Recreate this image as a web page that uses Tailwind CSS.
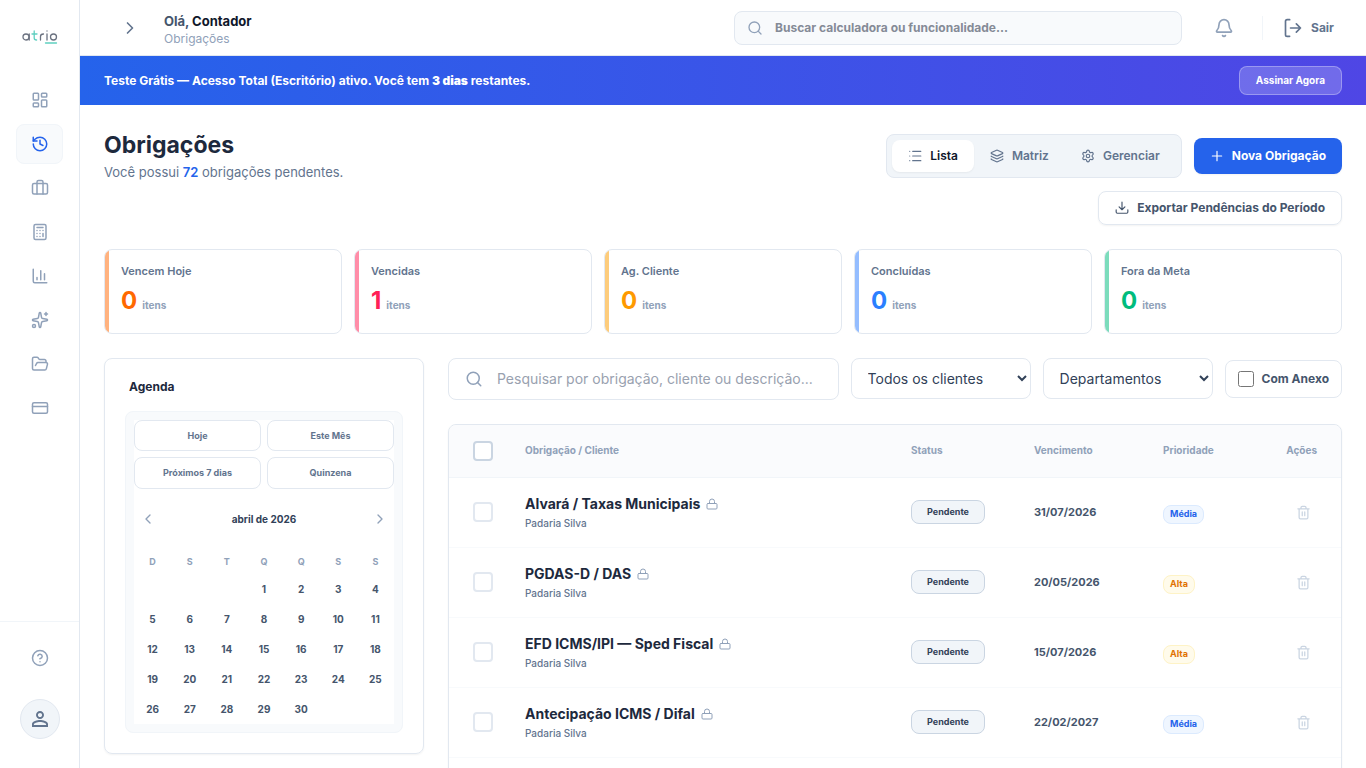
<!DOCTYPE html>
<html lang="pt-BR">
<head>
  <meta charset="UTF-8">
  <meta name="viewport" content="width=device-width, initial-scale=1.0">
  <title>Atrio - Obrigações</title>
  <script src="https://cdn.jsdelivr.net/npm/@tailwindcss/browser@4"></script>
</head>
<body class="bg-white text-slate-800 font-['Inter',sans-serif] [stroke-linecap:round] [stroke-linejoin:round]">

  <!-- Ícones -->
  <svg class="hidden">
    <symbol id="i-dashboard" viewBox="0 0 24 24"><rect width="7" height="9" x="3" y="3" rx="1"/><rect width="7" height="5" x="14" y="3" rx="1"/><rect width="7" height="9" x="14" y="12" rx="1"/><rect width="7" height="5" x="3" y="16" rx="1"/></symbol>
    <symbol id="i-history" viewBox="0 0 24 24"><path d="M3 12a9 9 0 1 0 9-9 9.75 9.75 0 0 0-6.74 2.74L3 8"/><path d="M3 3v5h5"/><path d="M12 7v5l4 2"/></symbol>
    <symbol id="i-briefcase" viewBox="0 0 24 24"><path d="M16 20V4a2 2 0 0 0-2-2h-4a2 2 0 0 0-2 2v16"/><rect width="20" height="14" x="2" y="6" rx="2"/></symbol>
    <symbol id="i-calc" viewBox="0 0 24 24"><rect width="16" height="20" x="4" y="2" rx="2"/><path d="M8 6h8M16 14v4M16 10h.01M12 10h.01M8 10h.01M12 14h.01M8 14h.01M12 18h.01M8 18h.01"/></symbol>
    <symbol id="i-chart" viewBox="0 0 24 24"><path d="M3 3v16a2 2 0 0 0 2 2h16"/><path d="M18 17V9M13 17V5M8 17v-3"/></symbol>
    <symbol id="i-sparkles" viewBox="0 0 24 24"><path d="M11.017 2.814a1 1 0 0 1 1.966 0l1.051 5.558a2 2 0 0 0 1.594 1.594l5.558 1.051a1 1 0 0 1 0 1.966l-5.558 1.051a2 2 0 0 0-1.594 1.594l-1.051 5.558a1 1 0 0 1-1.966 0l-1.051-5.558a2 2 0 0 0-1.594-1.594l-5.558-1.051a1 1 0 0 1 0-1.966l5.558-1.051a2 2 0 0 0 1.594-1.594z"/><path d="M20 2v4M22 4h-4"/><circle cx="4" cy="20" r="2"/></symbol>
    <symbol id="i-folder" viewBox="0 0 24 24"><path d="m6 14 1.5-2.9A2 2 0 0 1 9.24 10H20a2 2 0 0 1 1.94 2.5l-1.54 6a2 2 0 0 1-1.95 1.5H4a2 2 0 0 1-2-2V5a2 2 0 0 1 2-2h3.9a2 2 0 0 1 1.69.9l.81 1.2a2 2 0 0 0 1.67.9H18a2 2 0 0 1 2 2v2"/></symbol>
    <symbol id="i-card" viewBox="0 0 24 24"><rect width="20" height="14" x="2" y="5" rx="2"/><path d="M2 10h20"/></symbol>
    <symbol id="i-help" viewBox="0 0 24 24"><circle cx="12" cy="12" r="10"/><path d="M9.09 9a3 3 0 0 1 5.83 1c0 2-3 3-3 3M12 17h.01"/></symbol>
    <symbol id="i-right" viewBox="0 0 24 24"><path d="m9 18 6-6-6-6"/></symbol>
    <symbol id="i-left" viewBox="0 0 24 24"><path d="m15 18-6-6 6-6"/></symbol>
    <symbol id="i-search" viewBox="0 0 24 24"><circle cx="11" cy="11" r="8"/><path d="m21 21-4.3-4.3"/></symbol>
    <symbol id="i-bell" viewBox="0 0 24 24"><path d="M10.268 21a2 2 0 0 0 3.464 0"/><path d="M3.262 15.326A1 1 0 0 0 4 17h16a1 1 0 0 0 .74-1.673C19.41 13.956 18 12.499 18 8A6 6 0 0 0 6 8c0 4.499-1.411 5.956-2.738 7.326"/></symbol>
    <symbol id="i-logout" viewBox="0 0 24 24"><path d="M8 22H5a2 2 0 0 1-2-2V4a2 2 0 0 1 2-2h3M16 17l5-5-5-5M21 12H9"/></symbol>
    <symbol id="i-list" viewBox="0 0 24 24"><path d="M3 4h.01M3 12h.01M3 20h.01M8 4h14M8 12h14M8 20h14"/></symbol>
    <symbol id="i-layers" viewBox="0 0 24 24"><path d="M12.83 2.18a2 2 0 0 0-1.66 0L2.6 6.08a1 1 0 0 0 0 1.83l8.58 3.91a2 2 0 0 0 1.66 0l8.58-3.9a1 1 0 0 0 0-1.83z"/><path d="M2 12a1 1 0 0 0 .58.91l8.6 3.91a2 2 0 0 0 1.65 0l8.58-3.9A1 1 0 0 0 22 12M2 17a1 1 0 0 0 .58.91l8.6 3.91a2 2 0 0 0 1.65 0l8.58-3.9A1 1 0 0 0 22 17"/></symbol>
    <symbol id="i-settings" viewBox="0 0 24 24"><path d="M9.671 4.136a2.34 2.34 0 0 1 4.659 0 2.34 2.34 0 0 0 3.319 1.915 2.34 2.34 0 0 1 2.33 4.033 2.34 2.34 0 0 0 0 3.831 2.34 2.34 0 0 1-2.33 4.033 2.34 2.34 0 0 0-3.319 1.915 2.34 2.34 0 0 1-4.659 0 2.34 2.34 0 0 0-3.32-1.915 2.34 2.34 0 0 1-2.33-4.033 2.34 2.34 0 0 0 0-3.831A2.34 2.34 0 0 1 6.35 6.051a2.34 2.34 0 0 0 3.319-1.915"/><circle cx="12" cy="12" r="3"/></symbol>
    <symbol id="i-plus" viewBox="0 0 24 24"><path d="M4 12h16M12 4v16"/></symbol>
    <symbol id="i-download" viewBox="0 0 24 24"><path d="M22 15v4a2 2 0 0 1-2 2H4a2 2 0 0 1-2-2v-4M7 10l5 5 5-5M12 15V2"/></symbol>
    <symbol id="i-lock" viewBox="0 0 24 24"><rect width="20" height="11" x="2" y="11" rx="2"/><path d="M7 11V7a5 5 0 0 1 10 0v4"/></symbol>
    <symbol id="i-trash" viewBox="0 0 24 24"><path d="M3 6h18M19 6v14a2 2 0 0 1-2 2H7a2 2 0 0 1-2-2V6M8 6V4a2 2 0 0 1 2-2h4a2 2 0 0 1 2 2v2M10 11v6M14 11v6"/></symbol>
  </svg>

  <div class="flex items-start">

    <!-- Menu lateral -->
    <aside class="sticky top-0 flex h-screen w-20 shrink-0 flex-col border-r border-slate-200">
      <a href="#" aria-label="Atrio" class="flex h-20 justify-center pt-7">
        <svg class="h-4 w-9" viewBox="0 0 36 16" fill="none" stroke="#6b7280" stroke-width="1.3">
          <circle cx="4" cy="9" r="3"/><path d="M7.2 6v6"/>
          <path stroke="#5fcfc0" d="M12.2 3v7q0 2 2.4 2M10 6h5"/>
          <path d="M18.5 12V8.500q0-2.500 3-2.500M25 6v6M25 3v.1"/>
          <circle cx="31.500" cy="9" r="3"/>
          <path stroke="#5fcfc0" d="M23.500 15h11"/>
        </svg>
      </a>
      <nav class="flex flex-1 flex-col gap-1 px-4 text-slate-400">
        <a href="#" aria-label="Painel" class="flex h-10 items-center justify-center"><svg class="size-[18px] fill-none stroke-current stroke-2"><use href="#i-dashboard"/></svg></a>
        <a href="#" aria-label="Obrigações" class="flex h-10 items-center justify-center rounded-lg border border-slate-100 bg-slate-50 text-[#2563eb]"><svg class="size-[18px] fill-none stroke-current stroke-2"><use href="#i-history"/></svg></a>
        <a href="#" aria-label="Clientes" class="flex h-10 items-center justify-center"><svg class="size-[18px] fill-none stroke-current stroke-2"><use href="#i-briefcase"/></svg></a>
        <a href="#" aria-label="Calculadoras" class="flex h-10 items-center justify-center"><svg class="size-[18px] fill-none stroke-current stroke-2"><use href="#i-calc"/></svg></a>
        <a href="#" aria-label="Relatórios" class="flex h-10 items-center justify-center"><svg class="size-[18px] fill-none stroke-current stroke-2"><use href="#i-chart"/></svg></a>
        <a href="#" aria-label="Assistente" class="flex h-10 items-center justify-center"><svg class="size-[18px] fill-none stroke-current stroke-2"><use href="#i-sparkles"/></svg></a>
        <a href="#" aria-label="Arquivos" class="flex h-10 items-center justify-center"><svg class="size-[18px] fill-none stroke-current stroke-2"><use href="#i-folder"/></svg></a>
        <a href="#" aria-label="Assinatura" class="flex h-10 items-center justify-center"><svg class="size-[18px] fill-none stroke-current stroke-2"><use href="#i-card"/></svg></a>
      </nav>
      <div class="flex flex-col items-center gap-[21px] border-t border-slate-100 pt-4 pb-[29px]">
        <a href="#" aria-label="Ajuda" class="flex h-10 items-center text-slate-400"><svg class="size-[18px] fill-none stroke-current stroke-2"><use href="#i-help"/></svg></a>
        <button type="button" aria-label="Perfil" class="flex size-10 items-center justify-center rounded-full border border-slate-200 bg-slate-100 text-slate-500">
          <svg class="size-6" viewBox="0 0 24 24" fill="currentColor"><path d="M12 5.900c1.160 0 2.100.94 2.100 2.100s-.94 2.100-2.100 2.100S9.900 9.160 9.900 8s.94-2.100 2.100-2.100m0 9c2.970 0 6.100 1.460 6.100 2.100v1.100H5.900V17c0-.64 3.130-2.100 6.100-2.100M12 4C9.790 4 8 5.790 8 8s1.790 4 4 4 4-1.790 4-4-1.790-4-4-4zm0 9c-2.670 0-8 1.340-8 4v3h16v-3c0-2.660-5.330-4-8-4z"/></svg>
        </button>
      </div>
    </aside>

    <div class="min-w-0 flex-1">

      <!-- Topo -->
      <header class="flex h-14 items-center border-b border-slate-200 pr-8 pl-10">
        <button type="button" aria-label="Expandir menu" class="text-slate-500"><svg class="size-5 fill-none stroke-current stroke-2"><use href="#i-right"/></svg></button>
        <div class="ml-6 pt-0.5">
          <p class="text-[13px] leading-5 font-bold text-slate-600">Olá, <span class="text-slate-900">Contador</span></p>
          <p class="text-xs text-slate-400">Obrigações</p>
        </div>
        <label class="ml-auto flex h-[34px] w-md items-center gap-3 rounded-lg border border-slate-200 bg-slate-50 px-3 text-slate-400">
          <svg class="size-4 shrink-0 fill-none stroke-current stroke-2"><use href="#i-search"/></svg>
          <input type="text" aria-label="Buscar" placeholder="Buscar calculadora ou funcionalidade..." class="min-w-0 flex-1 text-xs font-bold text-slate-700 outline-none placeholder:text-[#858b97]">
        </label>
        <button type="button" aria-label="Notificações" class="ml-8 text-slate-400"><svg class="size-5 fill-none stroke-current stroke-2"><use href="#i-bell"/></svg></button>
        <div class="ml-7 h-6 border-l border-slate-100"></div>
        <button type="button" class="ml-5 flex items-center gap-2 text-xs font-bold text-slate-500">
          <svg class="size-5 fill-none stroke-current stroke-2"><use href="#i-logout"/></svg>Sair
        </button>
      </header>

      <!-- Aviso de teste -->
      <div class="flex h-[49px] items-center justify-between bg-linear-to-r/srgb from-[#2563eb] to-[#4f46e5] px-6 text-white">
        <p class="text-xs font-bold">Teste Grátis — Acesso Total (Escritório) ativo. Você tem <span class="font-black">3 dias</span> restantes.</p>
        <button type="button" class="h-[29px] rounded-lg border border-white/30 bg-white/20 px-4 text-[10px] font-bold">Assinar Agora</button>
      </div>

      <main class="p-6">

        <!-- Título e ações -->
        <div class="mb-6 flex items-start justify-between">
          <div>
            <h1 class="text-[23px] leading-8 font-bold">Obrigações</h1>
            <p class="mt-px text-[13px] leading-5 text-slate-500">Você possui <span class="font-semibold text-[#2563eb]">72</span> obrigações pendentes.</p>
          </div>
          <div class="flex max-w-lg flex-wrap items-center justify-end gap-x-3 gap-y-[13px] pt-[5px] text-xs font-bold">
            <div class="flex h-11 rounded-lg border border-slate-200 bg-slate-100 p-[5px] font-semibold text-slate-500">
              <button type="button" class="flex items-center gap-2 rounded-lg bg-white px-4 text-slate-900 shadow-xs"><svg class="size-3.5 fill-none stroke-slate-500 stroke-2"><use href="#i-list"/></svg>Lista</button>
              <button type="button" class="flex items-center gap-2 px-4"><svg class="size-3.5 fill-none stroke-current stroke-2"><use href="#i-layers"/></svg>Matriz</button>
              <button type="button" class="flex items-center gap-2 px-4"><svg class="size-3.5 fill-none stroke-current stroke-2"><use href="#i-settings"/></svg>Gerenciar</button>
            </div>
            <button type="button" class="flex h-9 items-center gap-2 rounded-lg bg-[#2563eb] px-4 text-white shadow-xs"><svg class="size-3.5 fill-none stroke-current stroke-2"><use href="#i-plus"/></svg>Nova Obrigação</button>
            <button type="button" class="flex h-[34px] items-center gap-2 rounded-lg border border-slate-200 px-4 text-slate-600 shadow-xs"><svg class="size-3.5 fill-none stroke-current stroke-2"><use href="#i-download"/></svg>Exportar Pendências do Período</button>
          </div>
        </div>

        <!-- Resumo -->
        <div class="mb-6 grid grid-cols-5 gap-3">
          <div class="flex h-[85px] overflow-hidden rounded-lg border border-slate-200">
            <div class="w-1 bg-[#ffb27f]"></div>
            <div class="px-3 py-[13px]"><h2 class="text-[11px] leading-4 font-semibold text-slate-500">Vencem Hoje</h2><p class="mt-1.5 text-[10px] font-bold text-slate-400"><span class="mr-[5px] text-2xl font-bold text-[#ff6900]">0</span>itens</p></div>
          </div>
          <div class="flex h-[85px] overflow-hidden rounded-lg border border-slate-200">
            <div class="w-1 bg-[#ff8da8]"></div>
            <div class="px-3 py-[13px]"><h2 class="text-[11px] leading-4 font-semibold text-slate-500">Vencidas</h2><p class="mt-1.5 text-[10px] font-bold text-slate-400"><span class="mr-[5px] text-2xl font-bold text-[#ff2056]">1</span>itens</p></div>
          </div>
          <div class="flex h-[85px] overflow-hidden rounded-lg border border-slate-200">
            <div class="w-1 bg-[#fdcc7c]"></div>
            <div class="px-3 py-[13px]"><h2 class="text-[11px] leading-4 font-semibold text-slate-500">Ag. Cliente</h2><p class="mt-1.5 text-[10px] font-bold text-slate-400"><span class="mr-[5px] text-2xl font-bold text-[#fe9a00]">0</span>itens</p></div>
          </div>
          <div class="flex h-[85px] overflow-hidden rounded-lg border border-slate-200">
            <div class="w-1 bg-[#94bdff]"></div>
            <div class="px-3 py-[13px]"><h2 class="text-[11px] leading-4 font-semibold text-slate-500">Concluídas</h2><p class="mt-1.5 text-[10px] font-bold text-slate-400"><span class="mr-[5px] text-2xl font-bold text-[#2b7fff]">0</span>itens</p></div>
          </div>
          <div class="flex h-[85px] overflow-hidden rounded-lg border border-slate-200">
            <div class="w-1 bg-[#7cdcbc]"></div>
            <div class="px-3 py-[13px]"><h2 class="text-[11px] leading-4 font-semibold text-slate-500">Fora da Meta</h2><p class="mt-1.5 text-[10px] font-bold text-slate-400"><span class="mr-[5px] text-2xl font-bold text-[#00bc7d]">0</span>itens</p></div>
          </div>
        </div>

        <div class="flex items-start gap-6">

          <!-- Agenda -->
          <section class="w-80 shrink-0 rounded-lg border border-slate-200 p-5 shadow-xs">
            <h2 class="mb-4 px-1 text-xs font-bold">Agenda</h2>
            <div class="rounded-lg border border-slate-100 bg-slate-50 p-2">
              <div class="bg-white">
                <div class="grid grid-cols-2 gap-1.5 text-[9px] font-bold text-slate-500">
                  <button type="button" class="h-[31px] rounded-lg border border-slate-200">Hoje</button>
                  <button type="button" class="h-[31px] rounded-lg border border-slate-200">Este Mês</button>
                  <button type="button" class="h-8 rounded-lg border border-slate-200">Próximos 7 dias</button>
                  <button type="button" class="h-8 rounded-lg border border-slate-200">Quinzena</button>
                </div>
                <div class="mt-5 flex h-5 items-center justify-between px-1.5">
                  <button type="button" aria-label="Mês anterior" class="text-slate-400"><svg class="size-4 fill-none stroke-current stroke-2"><use href="#i-left"/></svg></button>
                  <span class="text-[10px] font-bold text-slate-700">abril de 2026</span>
                  <button type="button" aria-label="Próximo mês" class="text-slate-400"><svg class="size-4 fill-none stroke-current stroke-2"><use href="#i-right"/></svg></button>
                </div>
                <table class="mt-6 w-full table-fixed text-center text-[10px] text-slate-600">
                  <thead>
                    <tr class="h-[21px] align-top text-[9px] leading-[18px] text-slate-400"><th>D</th><th>S</th><th>T</th><th>Q</th><th>Q</th><th>S</th><th>S</th></tr>
                  </thead>
                  <tbody id="dias" class="font-bold"></tbody>
                </table>
              </div>
            </div>
          </section>

          <div class="min-w-0 flex-1">

            <!-- Filtros -->
            <div class="mb-6 flex items-start gap-3">
              <label class="flex h-[42px] min-w-0 flex-1 items-center gap-3.5 rounded-lg border border-slate-200 px-4 text-slate-400">
                <svg class="size-[18px] shrink-0 fill-none stroke-current stroke-2"><use href="#i-search"/></svg>
                <input type="text" aria-label="Pesquisar" placeholder="Pesquisar por obrigação, cliente ou descrição..." class="min-w-0 flex-1 text-sm text-slate-700 outline-none placeholder:text-gray-400">
              </label>
              <select aria-label="Clientes" class="h-[41px] w-[180px] rounded-lg border border-slate-200 bg-white px-3 text-sm text-slate-700"><option>Todos os clientes</option></select>
              <select aria-label="Departamentos" class="h-[41px] w-[170px] rounded-lg border border-slate-200 bg-white px-3 text-sm text-slate-700"><option>Departamentos</option></select>
              <label class="mt-0.5 flex h-[38px] items-center gap-2 rounded-lg border border-slate-200 px-3 text-xs font-bold whitespace-nowrap text-slate-600"><input type="checkbox" class="size-4">Com Anexo</label>
            </div>

            <!-- Tabela de obrigações -->
            <div class="overflow-hidden rounded-lg border border-slate-200 shadow-xs">
              <table class="w-full table-fixed text-left">
                <thead class="bg-slate-50/70 text-[10px] text-slate-400">
                  <tr class="h-[52px] border-b border-slate-100">
                    <th class="w-[60px] pl-6"><input type="checkbox" aria-label="Selecionar todas" class="block size-5 appearance-none rounded-sm border-2 border-slate-300 bg-white"></th>
                    <th class="px-4">Obrigação / Cliente</th>
                    <th class="w-[123px] px-4">Status</th>
                    <th class="w-[129px] px-4">Vencimento</th>
                    <th class="w-[115px] px-4">Prioridade</th>
                    <th class="w-[79px] pr-6 text-right">Ações</th>
                  </tr>
                </thead>
                <tbody id="obrigacoes"></tbody>
              </table>
            </div>
          </div>
        </div>
      </main>
    </div>
  </div>

  <script>
    // Calendário: abril de 2026 começa numa quarta-feira
    let dias = '';
    for (let semana = 0; semana < 5; semana++) {
      dias += '<tr class="h-[30px]">';
      for (let i = 0; i < 7; i++) {
        const dia = semana * 7 + i - 2;
        dias += `<td>${dia >= 1 && dia <= 30 ? dia : ''}</td>`;
      }
      dias += '</tr>';
    }
    document.getElementById('dias').innerHTML = dias;

    const obrigacoes = [
      { nome: "Alvará / Taxas Municipais", data: "31/07/2026", prioridade: "Média" },
      { nome: "PGDAS-D / DAS", data: "20/05/2026", prioridade: "Alta" },
      { nome: "EFD ICMS/IPI — Sped Fiscal", data: "15/07/2026", prioridade: "Alta" },
      { nome: "Antecipação ICMS / Difal", data: "22/02/2027", prioridade: "Média" },
      { nome: "DCTFWeb", data: "15/05/2026", prioridade: "Alta" }
    ];

    const cores = {
      "Média": "border-blue-100 bg-blue-50 text-[#2563eb]",
      "Alta": "border-amber-100 bg-amber-50 text-amber-600"
    };

    document.getElementById('obrigacoes').innerHTML = obrigacoes.map(({nome, data, prioridade}) => `
      <tr class="h-[70px] border-b border-slate-50">
        <td class="pl-6"><input type="checkbox" aria-label="Selecionar ${nome}" class="block size-5 appearance-none rounded-sm border-2 border-slate-200 bg-white"></td>
        <td class="px-4">
          <p class="flex items-center gap-1.5 text-sm font-bold">${nome}<svg class="size-3 fill-none stroke-slate-400 stroke-2"><use href="#i-lock"/></svg></p>
          <p class="mt-px text-[10px] leading-4 font-medium text-slate-500">Padaria Silva</p>
        </td>
        <td class="px-4"><button type="button" class="block h-6 w-[74px] rounded-lg border border-slate-300 bg-slate-100 text-[9px] font-bold text-slate-700">Pendente</button></td>
        <td class="px-4 text-[11px] font-bold text-slate-600">${data}</td>
        <td class="px-4 pt-1"><span class="flex h-[19px] w-fit items-center rounded-lg border px-1.5 text-[9px] font-bold ${cores[prioridade]}">${prioridade}</span></td>
        <td class="pr-[30px]"><button type="button" aria-label="Excluir" class="ml-auto block text-slate-300"><svg class="size-[15px] fill-none stroke-current stroke-2"><use href="#i-trash"/></svg></button></td>
      </tr>`).join('');
  </script>
</body>
</html>
